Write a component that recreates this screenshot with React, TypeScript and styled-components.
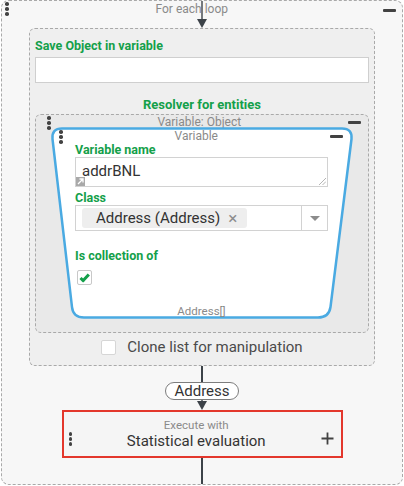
import { FC } from "react";
import styled, { createGlobalStyle } from "styled-components";

const green = "#14a04a";
const gray = "#8a8a8a";
const dark = "#424242";

const GlobalStyle = createGlobalStyle`
  html, body {
    margin: 0;
    padding: 0;
    background: #ffffff;
  }
  body {
    font-family: Roboto, "Liberation Sans", Arial, sans-serif;
  }
  * {
    box-sizing: border-box;
  }
`;

const Dots: FC = () => (
  <DotColumn>
    <span />
    <span />
    <span />
  </DotColumn>
);

const ArrowDown: FC<{ height: number; head?: boolean }> = ({ height, head = true }) => (
  <svg width="12" height={height} viewBox={`0 0 12 ${height}`}>
    <line x1="6" y1="0" x2="6" y2={head ? height - 8 : height} stroke="#3c4248" strokeWidth="1.4" />
    {head && <polygon points={`1,${height - 9} 11,${height - 9} 6,${height}`} fill="#3c4248" />}
  </svg>
);

const Trapezoid: FC = () => (
  <Shape width="304" height="192" viewBox="0 0 304 192">
    <path
      d="M 12 1.5 H 292 Q 302.5 1.5 301.5 12 L 280.5 180 Q 279 190.5 268 190.5 H 34 Q 23 190.5 22 180 L 2.5 12 Q 1.5 1.5 12 1.5 Z"
      fill="#ffffff"
      stroke="#4aaae2"
      strokeWidth="2.5"
    />
  </Shape>
);

const App: FC = () => {
  return (
    <>
      <GlobalStyle />
      <Frame>
        <FrameHeader>
          <Dots />
          <HeaderTitle>For each loop</HeaderTitle>
          <Minus />
        </FrameHeader>
        <ArrowDown height={27} />

        <SaveBlock>
          <Label>Save Object in variable</Label>
          <TextInput />
          <CenterLabel>Resolver for entities</CenterLabel>

          <ObjectBlock>
            <BlockHeader>
              <Dots />
              <HeaderTitle>Variable: Object</HeaderTitle>
              <Minus />
            </BlockHeader>

            <VariableCard>
              <Trapezoid />
              <CardHeader>
                <Dots />
                <HeaderTitle>Variable</HeaderTitle>
                <Minus />
              </CardHeader>
              <Label>Variable name</Label>
              <TextArea>
                addrBNL
                <ExpandIcon>
                  <svg width="9" height="9" viewBox="0 0 9 9">
                    <path d="M2 7 L7 2 M3.5 2 H7 V5.5" stroke="#fff" strokeWidth="1.3" fill="none" />
                  </svg>
                </ExpandIcon>
                <Grip>
                  <svg width="8" height="8" viewBox="0 0 8 8">
                    <path d="M1 8 L8 1 M4.5 8 L8 4.5" stroke="#b5b5b5" strokeWidth="1" />
                  </svg>
                </Grip>
              </TextArea>
              <Label $top={4}>Class</Label>
              <Select>
                <Chip>
                  Address (Address)
                  <ChipClose>×</ChipClose>
                </Chip>
                <Caret>
                  <svg width="10" height="6" viewBox="0 0 10 6">
                    <polygon points="0,0 10,0 5,5" fill="#8c8c8c" />
                  </svg>
                </Caret>
              </Select>
              <Label $top={18}>Is collection of</Label>
              <CheckBox $top={7}>
                <svg width="13" height="13" viewBox="0 0 13 13">
                  <path d="M2.5 7 L5.2 9.6 L10.8 3.4" stroke={green} strokeWidth="3" fill="none" strokeLinejoin="round" />
                </svg>
              </CheckBox>
              <TypeName>Address[]</TypeName>
            </VariableCard>
          </ObjectBlock>

          <CloneRow>
            <EmptyBox />
            <CloneText>Clone list for manipulation</CloneText>
          </CloneRow>
        </SaveBlock>

        <Line $height={16} />
        <Pill>Address</Pill>
        <ArrowDown height={10} />
        <ExecuteBox>
          <Dots />
          <ExecuteText>
            <ExecuteCaption>Execute with</ExecuteCaption>
            <ExecuteName>Statistical evaluation</ExecuteName>
          </ExecuteText>
          <Plus>
            <svg width="13" height="13" viewBox="0 0 13 13">
              <path d="M6.5 0.5 V12.5 M0.5 6.5 H12.5" stroke={dark} strokeWidth="1.8" />
            </svg>
          </Plus>
        </ExecuteBox>
        <Line $grow />
      </Frame>
    </>
  );
};

export default App;

const Frame = styled.div`
  position: relative;
  margin-left: 1px;
  width: 402px;
  height: 485px;
  border: 1px dashed #a9a9a9;
  border-radius: 8px;
  background: #f7f7f7;
  display: flex;
  flex-direction: column;
  align-items: center;
`;

const DotColumn = styled.div`
  display: flex;
  flex-direction: column;
  gap: 1.5px;

  span {
    width: 3.5px;
    height: 3.5px;
    border-radius: 50%;
    background: ${dark};
  }
`;

const Minus = styled.div`
  width: 13px;
  height: 2.5px;
  border-radius: 1px;
  background: ${dark};
`;

const HeaderTitle = styled.div`
  flex: 1;
  text-align: center;
  font-size: 12px;
  line-height: 14px;
  color: ${gray};
`;

const FrameHeader = styled.div`
  position: absolute;
  top: 1px;
  left: 3px;
  right: 6px;
  display: flex;
  align-items: flex-start;

  ${HeaderTitle} {
    padding-right: 8px;
    line-height: 14px;
  }
  ${Minus} {
    margin-top: 7px;
  }
`;

const SaveBlock = styled.div`
  width: 346px;
  padding: 10px 5px 10px;
  border: 1px dashed #a9a9a9;
  border-radius: 6px;
  background: #efefef;
  display: flex;
  flex-direction: column;
`;

const Label = styled.div<{ $top?: number }>`
  margin-top: ${(p) => p.$top ?? 0}px;
  font-size: 12.5px;
  font-weight: 700;
  line-height: 14px;
  color: ${green};
`;

const TextInput = styled.div`
  margin-top: 4px;
  height: 26px;
  background: #ffffff;
  border: 1px solid #cfcfcf;
`;

const CenterLabel = styled(Label)`
  margin-top: 14px;
  line-height: 16px;
  text-align: center;
  font-size: 13px;
`;

const ObjectBlock = styled.div`
  margin-top: 1px;
  padding: 0 14px 13px;
  border: 1px dashed #a9a9a9;
  border-radius: 6px;
  background: #e9e9e9;
  display: flex;
  flex-direction: column;
`;

const BlockHeader = styled.div`
  height: 12px;
  margin: 0 -7px 0 -3px;
  display: flex;
  align-items: flex-start;

  ${DotColumn} {
    margin-top: 1px;
  }
  ${Minus} {
    margin-top: 6px;
  }
`;

const VariableCard = styled.div`
  position: relative;
  width: 304px;
  height: 192px;
  padding: 2px 26px 0 25px;
  display: flex;
  flex-direction: column;

  > *:not(svg) {
    position: relative;
  }
`;

const Shape = styled.svg`
  position: absolute;
  inset: 0;
`;

const CardHeader = styled.div`
  height: 14px;
  margin: 0 -15px 0 -16px;
  display: flex;
  align-items: flex-start;

  ${DotColumn} {
    margin-top: 1px;
  }
  ${Minus} {
    margin-top: 6px;
  }
`;

const TextArea = styled.div`
  position: relative;
  height: 30px;
  background: #ffffff;
  border: 1px solid #d2d2d2;
  padding: 4px 0 0 6px;
  font-size: 15px;
  line-height: 18px;
  color: #333;
`;

const ExpandIcon = styled.div`
  position: absolute;
  left: 0;
  bottom: 0;
  width: 9px;
  height: 9px;
  background: #a9a9a9;
  display: flex;
`;

const Grip = styled.div`
  position: absolute;
  right: 1px;
  bottom: 1px;
  display: flex;
`;

const Select = styled.div`
  height: 26px;
  background: #ffffff;
  border: 1px solid #d2d2d2;
  display: flex;
  align-items: center;
  padding-left: 6px;
`;

const Chip = styled.div`
  width: 165px;
  height: 20px;
  border-radius: 3px;
  background: #eeeeee;
  padding-left: 14px;
  display: flex;
  align-items: center;
  gap: 8px;
  font-size: 15px;
  color: #333;
`;

const ChipClose = styled.span`
  font-size: 17px;
  color: #8c8c8c;
`;

const Caret = styled.div`
  margin-left: auto;
  width: 26px;
  height: 100%;
  border-left: 1px solid #d2d2d2;
  display: flex;
  align-items: center;
  justify-content: center;
  padding-top: 1px;
`;

const CheckBox = styled.div<{ $top?: number }>`
  margin-top: ${(p) => p.$top ?? 0}px;
  margin-left: 2px;
  width: 15px;
  height: 15px;
  border: 1px solid #c8c8c8;
  border-radius: 2px;
  background: #ffffff;
  display: flex;
  align-items: center;
  justify-content: center;
`;

const TypeName = styled.div`
  margin-top: 19px;
  text-align: center;
  font-size: 11.5px;
  line-height: 14px;
  color: ${gray};
`;

const CloneRow = styled.div`
  margin-top: 6px;
  height: 16px;
  display: flex;
  align-items: center;
  justify-content: center;
  gap: 11px;
`;

const EmptyBox = styled.div`
  width: 15px;
  height: 15px;
  border: 1px solid #d6d6d6;
  border-radius: 2px;
  background: #ffffff;
`;

const CloneText = styled.span`
  font-size: 15px;
  color: #4a4a4a;
`;

const Line = styled.div<{ $height?: number; $grow?: boolean }>`
  width: 1.4px;
  background: #3c4248;
  height: ${(p) => (p.$height ? `${p.$height}px` : "auto")};
  flex: ${(p) => (p.$grow ? 1 : "none")};
`;

const Pill = styled.div`
  height: 18px;
  padding: 0 8px;
  border: 1px solid #7d7d7d;
  border-radius: 9px;
  background: #ffffff;
  font-size: 15px;
  line-height: 16px;
  color: #333;
`;

const ExecuteBox = styled.div`
  width: 281px;
  height: 48px;
  border: 2px solid #e3372c;
  background: #f5f5f5;
  padding: 0 7px 0 5px;
  display: flex;
  align-items: center;

  ${DotColumn} {
    margin-top: 10px;
  }
`;

const ExecuteText = styled.div`
  flex: 1;
  display: flex;
  flex-direction: column;
  align-items: center;
  padding-top: 1px;
`;

const ExecuteCaption = styled.div`
  font-size: 11.5px;
  line-height: 13px;
  color: ${gray};
`;

const ExecuteName = styled.div`
  font-size: 15px;
  line-height: 18px;
  color: #333;
`;

const Plus = styled.div`
  display: flex;
  margin-top: 8px;
`;
